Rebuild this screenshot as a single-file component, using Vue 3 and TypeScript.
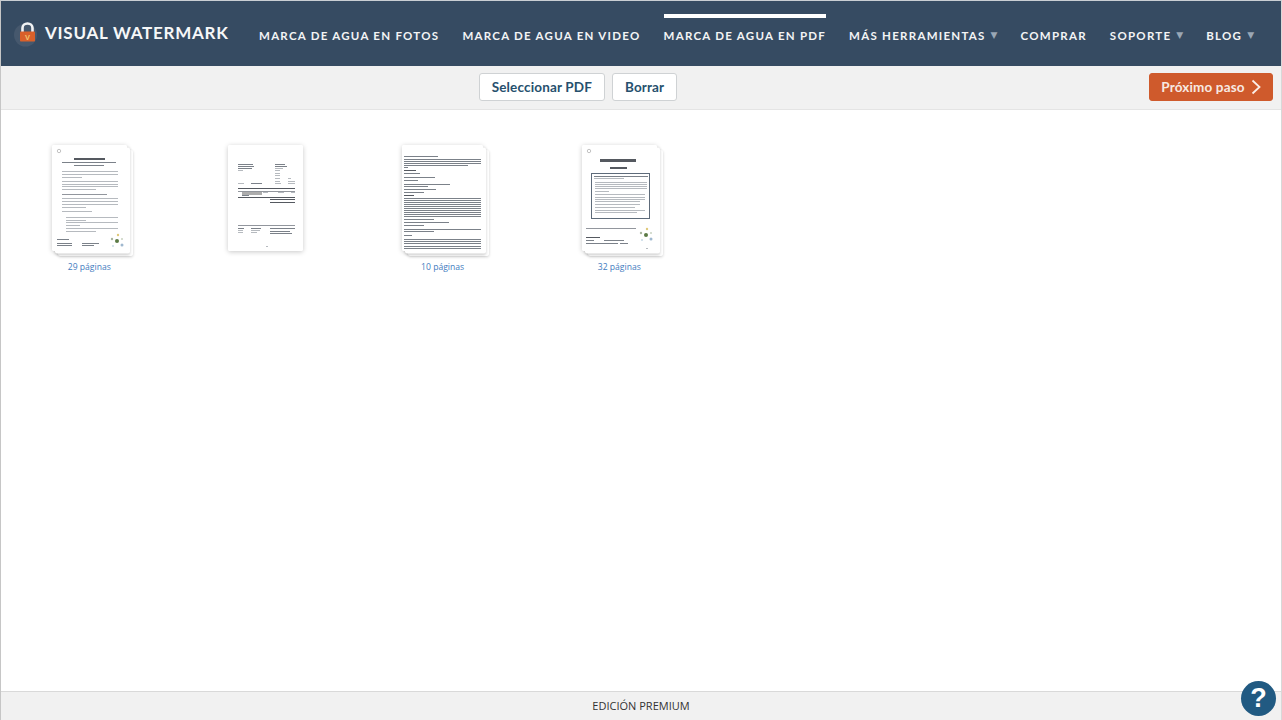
<script setup lang="ts">
type Line = [number, number, number, number?, string?]
interface Doc { w: number; stack: boolean; label: string; lines: Line[]; boxes?: number[][]; cluster?: [number, number]; ring?: boolean }

const nav = [
  { t: 'MARCA DE AGUA EN FOTOS' },
  { t: 'MARCA DE AGUA EN VIDEO' },
  { t: 'MARCA DE AGUA EN PDF', active: true },
  { t: 'MÁS HERRAMIENTAS', arrow: true },
  { t: 'COMPRAR' },
  { t: 'SOPORTE', arrow: true },
  { t: 'BLOG', arrow: true }
]

const g = '#a4a9af'
const d = '#5a616b'
const k = '#2a2f38'
function para(x: number, w: number, ys: number[], c = g, last?: number): Line[] {
  return ys.map((y, i) => [x, y, i === ys.length - 1 && last ? last : w, 1, c] as Line)
}

const doc1: Line[] = [
  [22, 13, 31, 2, k], [10, 17, 54, 1, d], [22, 20, 30, 1, d],
  ...para(10, 56, [26, 29, 32], g, 20),
  ...para(10, 56, [36, 39, 41, 44], g, 34),
  [10, 49, 45, 1, '#777c84'],
  ...para(10, 56, [53, 56, 59, 62], g, 24),
  [10, 66, 30, 1, g],
  ...para(14, 52, [72, 75], g, 20),
  ...para(14, 52, [77, 80], g, 14),
  ...para(14, 52, [83, 86], g, 30),
  [5, 94, 12, 1, d], [5, 98, 15, 1, d], [5, 100, 15, 1, d], [30, 98, 17, 1, d], [30, 100, 12, 1, d]
]
const doc2: Line[] = [
  [10, 19, 15, 1, d], [10, 21, 16, 1, d], [10, 23, 14, 1, d], [10, 25, 5, 1, g],
  [47, 19, 10, 1, d], [47, 21, 12, 1, d], [47, 23, 8, 1, g], [47, 25, 5, 1, g], [47, 28, 5, 1, g], [47, 30, 5, 1, g], [47, 33, 5, 1, g], [60, 33, 3, 1, g],
  [47, 36, 5, 1, g], [60, 36, 7, 1, g], [60, 38, 7, 1, g],
  [10, 38, 6, 1, g], [23, 38, 11, 1, d], [47, 38, 6, 1, g],
  [10, 43, 57, 1, k], [10, 46, 57, 1, '#777c84'],
  [14, 47, 20, 3, '#999'], [14, 50, 7, 1, d], [35, 47, 5, 1, g], [50, 47, 6, 1, g], [63, 47, 4, 1, g],
  [10, 52, 57, 1, k], [42, 54, 25, 1, k], [42, 57, 25, 1, k],
  [10, 80, 57, 1, '#777c84'], [10, 83, 6, 1, d], [10, 85, 5, 1, g], [10, 87, 5, 1, g],
  [23, 83, 10, 1, d], [23, 85, 9, 1, g], [23, 87, 6, 1, g],
  [42, 83, 25, 1, d], [42, 86, 20, 1, d], [42, 88, 22, 1, d], [38, 101, 2, 1, g]
]
const doc3: Line[] = [
  [2, 11, 34, 1, d],
  ...para(2, 77, [14, 16, 18, 20], d, 64), [2, 22, 4, 1, d],
  [2, 25, 12, 1, k], [2, 28, 16, 1, d], [2, 32, 31, 1, d], [2, 35, 14, 1, d],
  [2, 39, 46, 1, d], [2, 41, 24, 1, d], [2, 44, 32, 1, d], [2, 47, 20, 1, d], [2, 50, 10, 1, k],
  ...para(2, 77, [53, 55, 57, 59, 61, 63, 65, 67, 69, 71], d),
  [2, 74, 30, 1, d], [2, 77, 45, 1, d], [2, 80, 20, 1, d],
  [2, 84, 77, 1, d], [2, 86, 30, 1, d], [2, 90, 8, 1, d],
  ...para(2, 77, [94, 96, 98, 101, 103], d)
]
const doc4: Line[] = [
  [18, 14, 36, 3, k], [28, 22, 17, 2, k],
  ...para(12, 54, [31], d), [12, 33, 30, 1, g],
  ...para(13, 52, [37, 39, 41, 43], g), [13, 46, 14, 1, g], [13, 49, 50, 1, g], [13, 52, 50, 1, g], [13, 54, 50, 1, g], [13, 56, 45, 1, g],
  [13, 59, 45, 1, g], [13, 62, 40, 1, g], [13, 65, 50, 1, g], [13, 67, 42, 1, g],
  [4, 83, 50, 1, '#777c84'],
  [4, 92, 14, 1, k], [4, 95, 8, 1, d], [22, 95, 20, 1, d], [4, 98, 32, 1, d], [38, 98, 8, 1, d], [64, 103, 2, 1, g]
]

const docs: Doc[] = [
  { w: 75, stack: true, label: '29 páginas', lines: doc1, cluster: [65, 96], ring: true },
  { w: 75, stack: false, label: '', lines: doc2 },
  { w: 81, stack: true, label: '10 páginas', lines: doc3 },
  { w: 75, stack: true, label: '32 páginas', lines: doc4, boxes: [[9.5, 28.5, 58, 45]], cluster: [64, 90], ring: true }
]
</script>

<template>
  <div class="page">
    <header class="top">
      <a class="logo">
        <svg class="lock" width="30" height="30" viewBox="0 0 30 30" aria-hidden="true">
          <circle cx="11.5" cy="18" r="11.5" fill="#46586d" />
          <path d="M8.5 15 V11 a5 4.5 0 0 1 10 0 V15" fill="none" stroke="#f2f3f4" stroke-width="2.6" />
          <rect x="6" y="14.5" width="15" height="10" rx="0.8" fill="#d9602a" />
          <text x="13.5" y="22.5" text-anchor="middle" class="v">V</text>
        </svg>
        <span class="logo-text">VISUAL WATERMARK</span>
      </a>
      <nav class="nav">
        <a v-for="n in nav" :key="n.t" class="nav-item" :class="{ active: n.active }">
          <span>{{ n.t }}</span>
          <i v-if="n.arrow" class="arrow">▼</i>
        </a>
      </nav>
    </header>

    <div class="toolbar">
      <div class="center">
        <button class="btn">Seleccionar PDF</button>
        <button class="btn">Borrar</button>
      </div>
      <button class="btn next">
        Próximo paso
        <svg width="10" height="16" viewBox="0 0 10 16" aria-hidden="true"><path d="M1.5 1.5 L8.5 8 L1.5 14.5" fill="none" stroke="#fbeee8" stroke-width="1.8" /></svg>
      </button>
    </div>

    <main class="grid">
      <div v-for="(doc, i) in docs" :key="i" class="cell">
        <div class="stack" :class="{ multi: doc.stack }" :style="{ width: doc.w + 'px' }">
          <i v-if="doc.stack" class="layer l3"></i>
          <i v-if="doc.stack" class="layer l2"></i>
          <svg class="sheet" :width="doc.w" height="106" :viewBox="`0 0 ${doc.w} 106`" aria-hidden="true">
            <rect :width="doc.w" height="106" rx="2" fill="#fff" />
            <g class="ink">
              <circle v-if="doc.ring" cx="7" cy="6" r="1.7" fill="none" stroke="#aaa" stroke-width="0.7" />
              <rect v-for="(l, j) in doc.lines" :key="j" :x="l[0]" :y="l[1]" :width="l[2]" :height="l[3] ?? 1" :fill="l[4] ?? '#999'" opacity="0.8" />
              <rect v-for="(b, j) in doc.boxes" :key="'b' + j" :x="b[0]" :y="b[1]" :width="b[2]" :height="b[3]" fill="none" stroke="#5e6b7a" stroke-width="1" />
              <g v-if="doc.cluster" :transform="`translate(${doc.cluster[0]} ${doc.cluster[1]})`">
                <circle cx="0" cy="0" r="2" fill="#5b7a45" />
                <circle cx="1" cy="-6" r="1.2" fill="#e0c97a" />
                <circle cx="-5" cy="-2" r="1.2" fill="#a9b6a0" />
                <circle cx="5" cy="-2" r="1" fill="#c9d2c0" />
                <circle cx="5" cy="4" r="1.5" fill="#9fb8cf" />
                <circle cx="-4" cy="5" r="1" fill="#c6d9e6" />
              </g>
            </g>
          </svg>
        </div>
        <div class="label">{{ doc.label }}</div>
      </div>
    </main>

    <footer class="foot">EDICIÓN PREMIUM</footer>
    <a class="help">?</a>
  </div>
</template>

<style>
html, body { margin: 0; background: #fff; }
</style>

<style scoped>
.page {
  position: relative;
  box-sizing: border-box;
  width: 1282px;
  height: 720px;
  overflow: hidden;
  display: flex;
  flex-direction: column;
  background: #fff;
  border-top: 1px solid #c9ced3;
  border-left: 1px solid #c6c6c6;
  border-right: 1px solid #d8d8d8;
  font-family: "Lato", "Noto Sans", sans-serif;
}
.top {
  flex: none;
  height: 65px;
  background: #364b62;
  display: flex;
  align-items: stretch;
  color: #fff;
}
.logo {
  display: flex;
  align-items: center;
  padding-left: 13px;
  width: 258px;
  box-sizing: border-box;
  flex: none;
}
.lock { flex: none; margin-top: -4px; }
.v { font: 700 7.5px "Liberation Sans", sans-serif; fill: #f3c56e; }
.logo-text {
  margin-left: 1px;
  margin-top: -2px;
  font-size: 17px;
  font-weight: 700;
  letter-spacing: 0.75px;
  white-space: nowrap;
  color: #f6f7f8;
}
.nav { display: flex; gap: 23px; align-items: stretch; }
.nav-item {
  position: relative;
  display: flex;
  align-items: center;
  padding-top: 3px;
  font-size: 11.5px;
  font-weight: 700;
  letter-spacing: 1.26px;
  white-space: nowrap;
  color: #f3f4f5;
}
.nav-item.active::before {
  content: "";
  position: absolute;
  top: 13px;
  left: 0;
  right: 0;
  height: 4px;
  background: #fff;
}
.arrow {
  margin-left: 5px;
  font-style: normal;
  font-size: 9px;
  letter-spacing: 0;
  color: #9aa7b5;
  font-family: "DejaVu Sans", sans-serif;
}
.toolbar {
  flex: none;
  box-sizing: border-box;
  height: 44px;
  display: flex;
  align-items: center;
  padding: 0 8px 2px 0;
  background: #f1f1f1;
  border-bottom: 1px solid #e4e4e4;
}
.center {
  flex: 1;
  display: flex;
  justify-content: center;
  gap: 7px;
  padding-left: 6px;
}
.btn {
  height: 28px;
  box-sizing: border-box;
  padding: 0 12px;
  background: #fff;
  border: 1px solid #cfd2d4;
  border-radius: 3px;
  font-family: inherit;
  font-size: 13.5px;
  font-weight: 700;
  letter-spacing: 0.15px;
  color: #26506d;
}
.next {
  display: flex;
  align-items: center;
  justify-content: center;
  gap: 6px;
  width: 124px;
  padding: 0;
  background: #cf5a2c;
  border-color: #cf5a2c;
  color: #f7e9e2;
}
.grid {
  flex: 1;
  display: grid;
  grid-template-columns: repeat(auto-fill, 176.67px);
  align-content: start;
  padding-top: 35px;
}
.cell { display: flex; flex-direction: column; align-items: center; }
.stack {
  position: relative;
  height: 106px;
  border-radius: 2px;
  box-shadow: 0 1px 5px rgba(0, 0, 0, 0.22);
}
.sheet { position: relative; display: block; }
.ink { filter: blur(0.35px); }
.layer {
  position: absolute;
  inset: 0;
  background: #fff;
  border-radius: 2px;
  box-shadow: 0 1px 3px rgba(0, 0, 0, 0.2);
}
.l2 { transform: translate(3px, 2.5px); }
.l3 { transform: translate(6px, 5px); }
.label {
  height: 14px;
  margin-top: 9px;
  font-family: "Open Sans", sans-serif;
  font-size: 8.6px;
  line-height: 14px;
  color: #3f7cc0;
}
.foot {
  flex: none;
  box-sizing: border-box;
  height: 29px;
  background: #f1f1f1;
  border-top: 1px solid #d9d9d9;
  text-align: center;
  line-height: 28px;
  font-family: "Open Sans", sans-serif;
  font-size: 11px;
  color: #333;
}
.help {
  position: absolute;
  right: 5px;
  bottom: 4px;
  width: 35px;
  height: 35px;
  border-radius: 50%;
  background: #215a82;
  color: #fff;
  text-align: center;
  font: 700 27px/35px "Liberation Sans", sans-serif;
}
</style>
